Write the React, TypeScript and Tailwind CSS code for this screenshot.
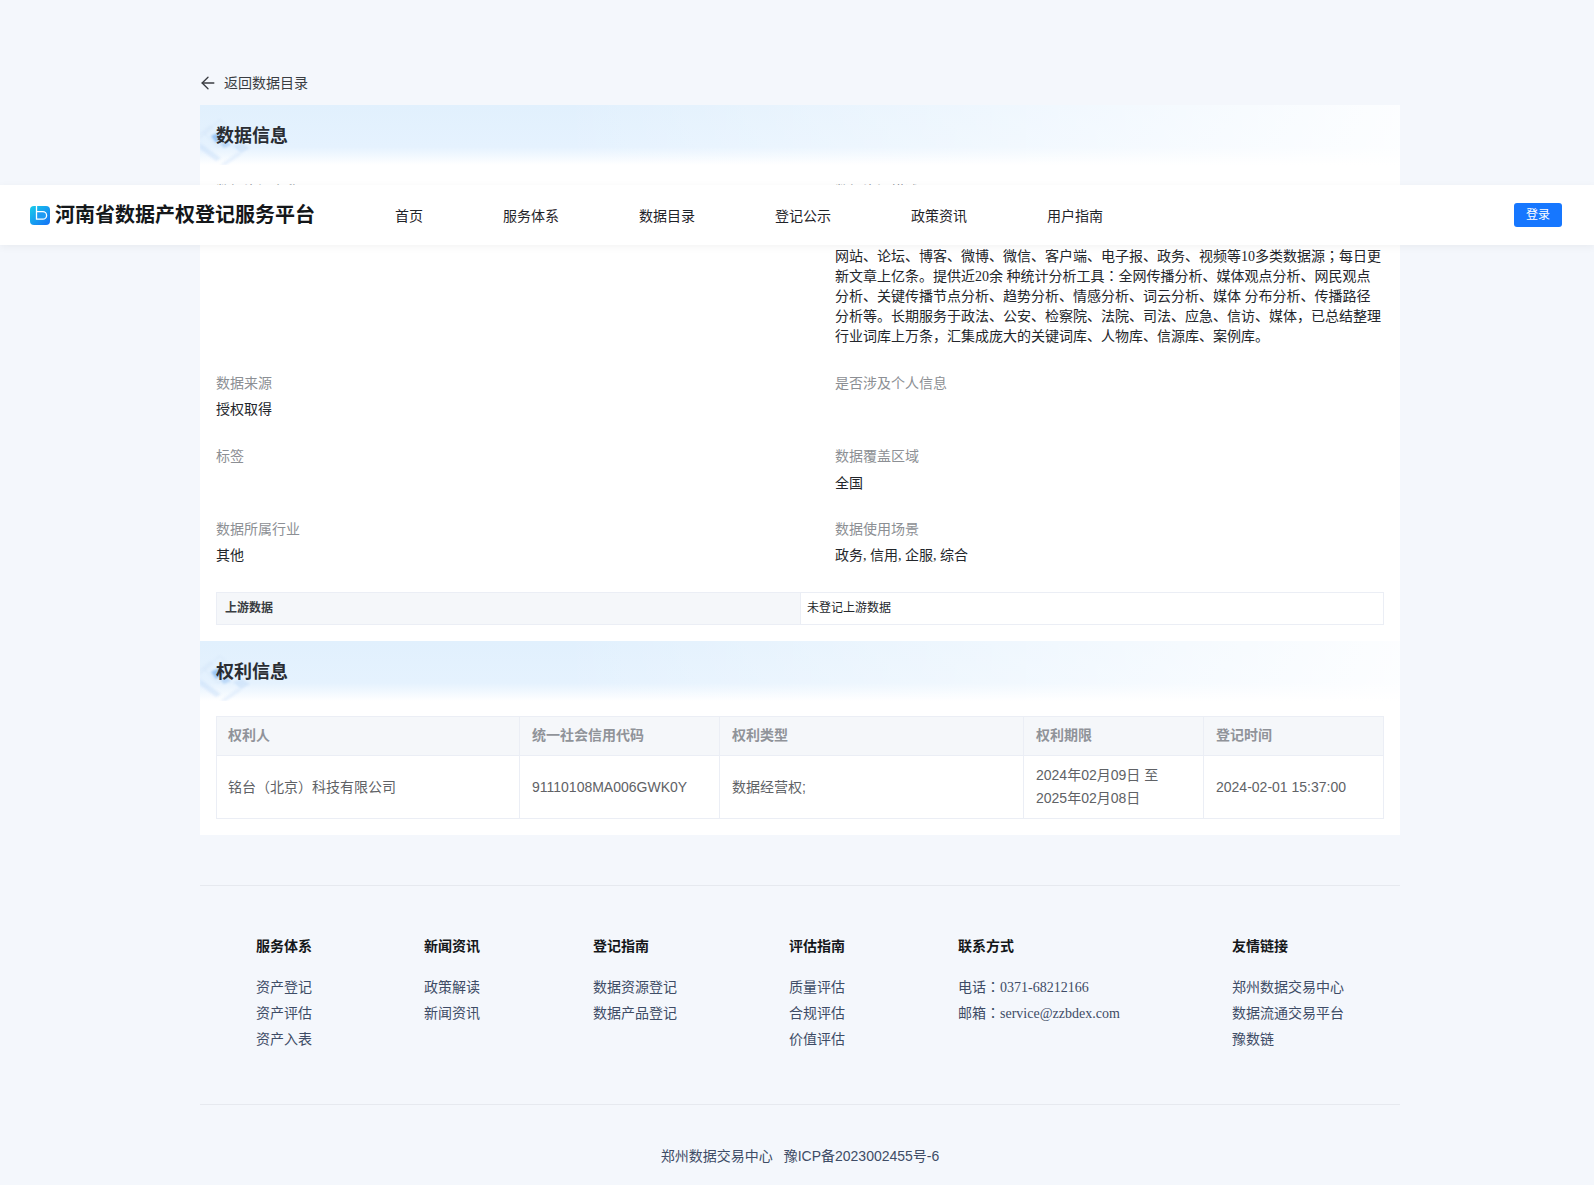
import React from 'react';
import { ArrowLeft } from 'lucide-react';

const navItems = ['首页', '服务体系', '数据目录', '登记公示', '政策资讯', '用户指南'];

const footerCols = [
  { title: '服务体系', links: ['资产登记', '资产评估', '资产入表'], w: 'w-[168px]' },
  { title: '新闻资讯', links: ['政策解读', '新闻资讯'], w: 'w-[169px]' },
  { title: '登记指南', links: ['数据资源登记', '数据产品登记'], w: 'w-[196px]' },
  { title: '评估指南', links: ['质量评估', '合规评估', '价值评估'], w: 'w-[169px]' },
];

const rightsHead = ['权利人', '统一社会信用代码', '权利类型', '权利期限', '登记时间'];

function Logo() {
  return (
    <svg width="20" height="19" viewBox="0 0 20 19" className="shrink-0">
      <defs>
        <linearGradient id="logoFill" x1="0" y1="0" x2="1" y2="1">
          <stop offset="0" stopColor="#17cdea" />
          <stop offset="1" stopColor="#1570f6" />
        </linearGradient>
      </defs>
      <rect width="20" height="19" rx="4" fill="url(#logoFill)" />
      <path d="M6.500 0V13.200H12.800a3.800 3.800 0 0 0 0-7.600H6.500" fill="#1e9bf3" stroke="#fff" strokeWidth="1.300" />
    </svg>
  );
}

function SectionHead({ title }: { title: string }) {
  return (
    <div className="relative h-[60px] overflow-hidden bg-[linear-gradient(180deg,#e1f0fd_0%,#e5f2fe_70%,#ffffff_100%)]">
      <div className="absolute inset-0 bg-[linear-gradient(90deg,rgba(255,255,255,0)_30%,rgba(255,255,255,0.9)_100%)]" />
      <svg width="60" height="60" viewBox="0 0 60 60" className="absolute left-0 top-0 blur-[0.8px]">
        <path d="M4 28 L20 15 L34 28 L18 42z" fill="none" stroke="#d6e7f9" strokeWidth="1" />
        <path d="M0 28 L10 20 L14 23 L0 34z" fill="#d8e8fa" opacity="0.5" />
        <path d="M11 31 L19 27 L24 33 L16 38z" fill="#8dbdf2" opacity="0.85" />
        <path d="M20 39 L27 36 L31 40 L24 43z" fill="#a9cdf5" opacity="0.7" />
        <path d="M33 41 L42 38 L50 43 L41 48z" fill="#bcd8f7" opacity="0.45" />
        <path d="M0 44 L16 56 L21 53 L0 38z" fill="#c4dcf8" opacity="0.45" />
        <path d="M20 60 L38 47 L42 49 L26 60z" fill="#d7e8fb" opacity="0.5" />
      </svg>
      <h2 className="relative pl-4 pt-[18px] text-lg leading-[26px] font-bold text-[#2a2d33]">{title}</h2>
    </div>
  );
}

function Field({ label, value, tall }: { label: string; value?: string; tall?: boolean }) {
  return (
    <div className="h-[73px]">
      <div className="text-sm leading-[22px] text-[#8c8f94]">{label}</div>
      {value && (
        <div className={`${tall ? 'mt-[6px]' : 'mt-[5px]'} font-["Liberation_Serif","Noto_Sans_CJK_SC",serif] text-sm leading-[22px] text-[#23262b]`}>
          {value}
        </div>
      )}
    </div>
  );
}

// centred full-width colon and semicolon, as in the reference
function Punct({ c }: { c: string }) {
  return <span className='font-["Noto_Sans_CJK_TC",sans-serif] leading-[0]'>{c}</span>;
}

export default function App() {
  return (
    <div className='relative h-[1185px] overflow-hidden bg-[#f4f7fc] font-["Liberation_Sans","Noto_Sans_CJK_SC",sans-serif]'>
      <header className="absolute left-0 right-0 top-[185px] z-10 flex h-[60px] items-center bg-white pl-[30px] pr-[32px] shadow-[0_2px_8px_rgba(0,0,0,0.05)]">
        <Logo />
        <div className="ml-[5px] w-[340px] text-[20px] leading-[28px] font-bold text-[#14171a]">河南省数据产权登记服务平台</div>
        <nav className="mt-[2px] flex gap-[80px]">
          {navItems.map(n => (
            <a key={n} className="text-sm text-[#1f2329]">{n}</a>
          ))}
        </nav>
        <button className="ml-auto h-6 w-12 rounded-[3px] bg-[#1677ff] text-xs text-white">登录</button>
      </header>

      <main className="ml-[200px] w-[1200px]">
        <div className="flex h-[105px] items-end pb-[11px]">
          <div className="-ml-[2px] flex items-center text-sm leading-[22px] text-[#3a3d42]">
            <ArrowLeft size={20} strokeWidth={1.6} className="mr-[6px]" />
            返回数据目录
          </div>
        </div>

        <section className="bg-white">
          <SectionHead title="数据信息" />
          <div className="px-4 pt-[15px]">
            <div className="grid grid-cols-[619px_1fr]">
              <div className="h-[192px] text-sm leading-[22px] text-[#8c8f94]">数据资源名称</div>
              <div className="h-[192px]">
                <div className="text-sm leading-[22px] text-[#8c8f94]">数据资源描述</div>
                <div className='mt-1 pt-[41px] font-["Liberation_Serif","Noto_Sans_CJK_SC",serif] text-sm leading-[20px] text-[#23262b]'>
                  网站、论坛、博客、微博、微信、客户端、电子报、政务、视频等10多类数据源<Punct c="；" />每日更新文章上亿条。提供近20余 种统计分析工具<Punct c="：" />全网传播分析、媒体观点分析、网民观点分析、关键传播节点分析、趋势分析、情感分析、词云分析、媒体 分布分析、传播路径分析等。长期服务于政法、公安、检察院、法院、司法、应急、信访、媒体，已总结整理行业词库上万条，汇集成庞大的关键词库、人物库、信源库、案例库。
                </div>
              </div>
              <Field label="数据来源" value="授权取得" />
              <Field label="是否涉及个人信息" />
              <Field label="标签" />
              <Field label="数据覆盖区域" value="全国" tall />
              <Field label="数据所属行业" value="其他" />
              <Field label="数据使用场景" value="政务, 信用, 企服, 综合" />
            </div>

            <div className="mt-px flex h-[33px] border border-[#ebeef5] text-xs leading-[30px] text-[#23262b]">
              <div className="w-[584px] border-r border-[#ebeef5] bg-[#f5f7fa] pl-2 font-bold text-[#3a3d42]">上游数据</div>
              <div className="pl-[6px]">未登记上游数据</div>
            </div>
          </div>

          <div className="mt-4">
            <SectionHead title="权利信息" />
          </div>
          <div className="px-4 pb-4 pt-[15px]">
            <table className="w-[1167px] table-fixed border-collapse text-sm leading-[23px]">
              <colgroup>
                <col className="w-[303px]" />
                <col className="w-[200px]" />
                <col className="w-[304px]" />
                <col className="w-[180px]" />
                <col className="w-[180px]" />
              </colgroup>
              <thead>
                <tr className="bg-[#f5f7fa] text-left text-[#909399]">
                  {rightsHead.map((h, i) => (
                    <th key={h} className={`h-[39px] border border-[#ebeef5] pb-[2px] pr-3 font-bold ${i === 0 ? 'pl-[11px]' : 'pl-3'}`}>{h}</th>
                  ))}
                </tr>
              </thead>
              <tbody className="text-[#606266]">
                <tr>
                  <td className="border border-[#ebeef5] py-2 pl-[11px] pr-3">铭台（北京）科技有限公司</td>
                  <td className="border border-[#ebeef5] px-3 py-2">91110108MA006GWK0Y</td>
                  <td className="border border-[#ebeef5] px-3 py-2">数据经营权;</td>
                  <td className="border border-[#ebeef5] px-3 py-2">2024年02月09日 至 2025年02月08日</td>
                  <td className="border border-[#ebeef5] px-3 py-2">2024-02-01 15:37:00</td>
                </tr>
              </tbody>
            </table>
          </div>
        </section>

        <footer className="mt-[50px] text-sm text-[#3e4c66]">
          <div className="flex h-[220px] border-y border-[#e6e9ef] pl-[56px] pt-[49px]">
            {footerCols.map(col => (
              <div key={col.title} className={`${col.w} shrink-0`}>
                <div className="mb-[19px] leading-[22px] font-bold text-[#14171a]">{col.title}</div>
                {col.links.map(l => (
                  <div key={l} className="h-[26px] leading-[22px]">{l}</div>
                ))}
              </div>
            ))}
            <div className="w-[274px] shrink-0">
              <div className="mb-[20px] leading-[22px] font-bold text-[#14171a]">联系方式</div>
              <div className='h-[26px] font-["Liberation_Serif","Noto_Sans_CJK_SC",serif] leading-[22px]'>电话<Punct c="：" />0371-68212166</div>
              <div className='h-[26px] font-["Liberation_Serif","Noto_Sans_CJK_SC",serif] leading-[22px]'>邮箱<Punct c="：" />service@zzbdex.com</div>
            </div>
            <div>
              <div className="mb-[19px] leading-[22px] font-bold text-[#14171a]">友情链接</div>
              {['郑州数据交易中心', '数据流通交易平台', '豫数链'].map(l => (
                <div key={l} className="h-[26px] leading-[22px]">{l}</div>
              ))}
            </div>
          </div>
          <div className="flex justify-center gap-[11px] pt-[40px] leading-[22px]">
            <span>郑州数据交易中心</span>
            <span>豫ICP备2023002455号-6</span>
          </div>
        </footer>
      </main>
    </div>
  );
}
